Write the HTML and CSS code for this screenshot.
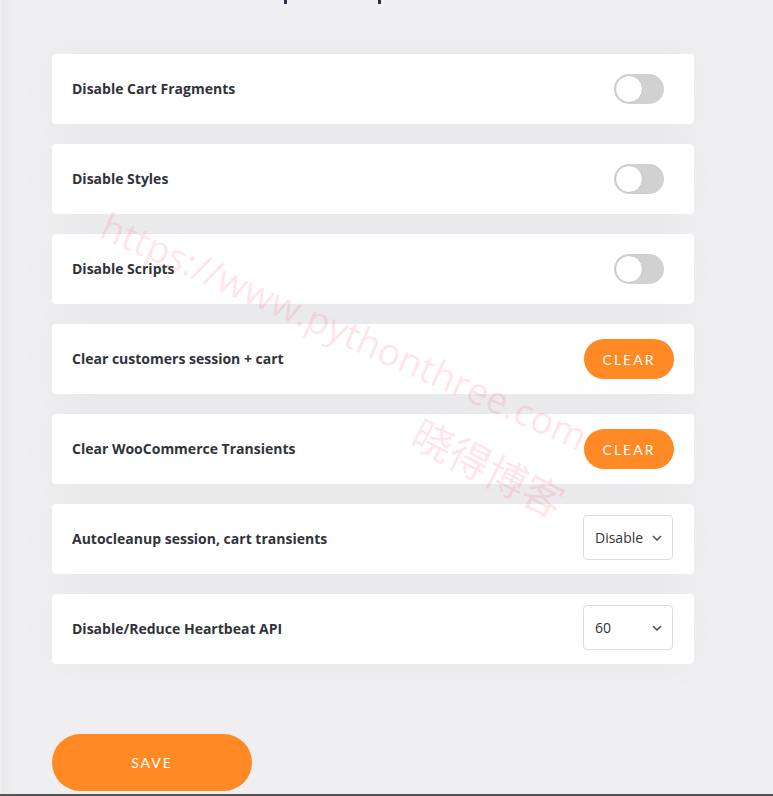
FILE: index.html
```html
<!DOCTYPE html>
<html lang="en">
<head>
<meta charset="utf-8">
<title>Settings</title>
<link rel="stylesheet" href="styles.css">
</head>
<body>
<div class="page">
  <div class="head-clip"><span class="frag frag-1"></span><span class="frag frag-2"></span></div>
  <div class="list">
    <div class="card">
      <span class="label">Disable Cart Fragments</span>
      <span class="toggle"><span class="knob"></span></span>
    </div>
    <div class="card">
      <span class="label">Disable Styles</span>
      <span class="toggle"><span class="knob"></span></span>
    </div>
    <div class="card">
      <span class="label">Disable Scripts</span>
      <span class="toggle"><span class="knob"></span></span>
    </div>
    <div class="card card-btn">
      <span class="label">Clear customers session + cart</span>
      <button class="clear">CLEAR</button>
    </div>
    <div class="card card-btn">
      <span class="label">Clear WooCommerce Transients</span>
      <button class="clear">CLEAR</button>
    </div>
    <div class="card card-sel">
      <span class="label">Autocleanup session, cart transients</span>
      <span class="select"><span class="sel-text">Disable</span><svg class="chev" viewBox="0 0 10 6" width="10" height="6"><path d="M1 1l4 4 4-4" fill="none" stroke="#555" stroke-width="1.6"/></svg></span>
    </div>
    <div class="card card-sel">
      <span class="label">Disable/Reduce Heartbeat API</span>
      <span class="select"><span class="sel-text">60</span><svg class="chev" viewBox="0 0 10 6" width="10" height="6"><path d="M1 1l4 4 4-4" fill="none" stroke="#555" stroke-width="1.6"/></svg></span>
    </div>
  </div>
  <button class="save">SAVE</button>
</div>
<div class="bottom-line"></div>
<div class="wm wm-url">https://www.pythonthree.com</div>
<div class="wm wm-cn">晓得博客</div>
</body>
</html>
```
FILE: styles.css
```css
html, body {
  margin: 0;
  padding: 0;
}
body {
  background: #efeff1;
  background-image: linear-gradient(90deg, #f3f3f4 0px, #e9e9eb 3px, #efeff1 14px);
  font-family: "Open Sans", sans-serif;
  height: 796px;
  overflow: hidden;
  position: relative;
}
.page {
  padding-left: 52px;
  width: 642px;
}
.head-clip {
  height: 4px;
  display: flex;
}
.frag {
  display: block;
  width: 3px;
  height: 4px;
  background: #2b3247;
}
.frag-1 {
  margin-left: 232px;
}
.frag-2 {
  margin-left: 91px;
}
.list {
  margin-top: 50px;
  display: flex;
  flex-direction: column;
  gap: 20px;
}
.card {
  background: #fff;
  border-radius: 4px;
  height: 70px;
  box-sizing: border-box;
  padding: 0 30px 0 20px;
  display: flex;
  align-items: center;
  justify-content: space-between;
  box-shadow: 0 0 40px rgba(0,0,0,0.035);
}
.card-btn {
  padding-right: 20px;
}
.card-sel {
  padding-right: 21px;
}
.label {
  font-size: 14px;
  font-weight: 700;
  color: #32333a;
  margin-top: -2px;
}
.toggle {
  width: 50px;
  height: 30px;
  background: #d1d1d1;
  border-radius: 15px;
  position: relative;
  display: block;
}
.knob {
  position: absolute;
  left: 1px;
  top: 1px;
  width: 28px;
  height: 28px;
  border-radius: 50%;
  background: #fff;
  box-sizing: border-box;
  border: 1px solid #c4c4c4;
}
.clear {
  width: 90px;
  height: 40px;
  border: none;
  border-radius: 20px;
  background: #ff8a25;
  color: #fff;
  font-family: Lato, sans-serif;
  font-size: 14px;
  letter-spacing: 2px;
  padding: 0;
}
.select {
  width: 90px;
  height: 45px;
  box-sizing: border-box;
  border: 1px solid #dcdcdc;
  border-radius: 4px;
  display: flex;
  align-items: center;
  justify-content: space-between;
  padding: 0 10px 0 11px;
  margin-top: -3px;
  font-family: "Open Sans", sans-serif;
  font-size: 14px;
  color: #333;
}
.save {
  margin-top: 70px;
  width: 200px;
  height: 57px;
  border: none;
  border-radius: 29px;
  background: #ff8a25;
  color: #fff;
  font-family: Lato, sans-serif;
  font-size: 14px;
  letter-spacing: 2px;
  padding: 0;
  display: block;
}
.bottom-line {
  position: absolute;
  left: 0;
  right: 0;
  bottom: 0;
  height: 2px;
  background: #555;
}
.wm {
  position: absolute;
  color: rgba(255, 90, 110, 0.16);
  font-family: "Open Sans", "Noto Sans CJK SC", sans-serif;
  white-space: nowrap;
  transform-origin: 0 0;
  pointer-events: none;
}
.wm-url {
  left: 114px;
  top: 200px;
  font-size: 37.5px;
  transform: rotate(24deg);
}
.wm-cn {
  left: 430px;
  top: 402px;
  font-size: 41px;
  font-family: "Noto Sans CJK SC", sans-serif;
  transform: rotate(27deg);
}
```
